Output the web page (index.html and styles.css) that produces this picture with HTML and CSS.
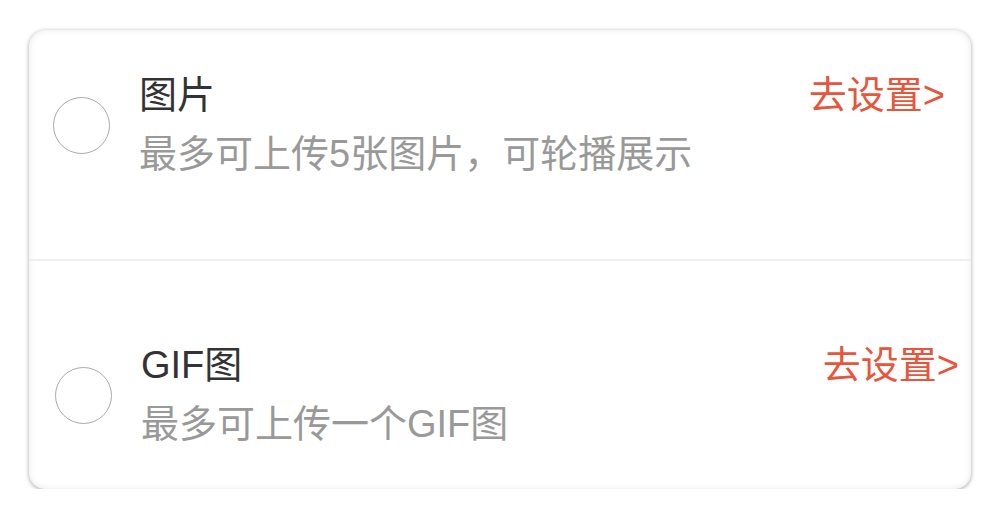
FILE: index.html
```html
<!DOCTYPE html>
<html lang="zh-CN">
<head>
    <meta charset="UTF-8">
    <meta name="viewport" content="width=device-width, initial-scale=1.0">
    <title>图片设置</title>
    <link rel="stylesheet" href="styles.css">
</head>
<body>
    <div class="card">
        <div class="option option-first">
            <div class="option-main">
                <span class="radio"></span>
                <div class="option-body">
                    <div class="option-head">
                        <span class="option-title">图片</span>
                        <a class="option-link" href="#">去设置&gt;</a>
                    </div>
                    <p class="option-desc">最多可上传5张图片，可轮播展示</p>
                </div>
            </div>
        </div>
        <div class="option option-last">
            <div class="option-main">
                <span class="radio"></span>
                <div class="option-body">
                    <div class="option-head">
                        <span class="option-title">GIF图</span>
                        <a class="option-link option-link-far" href="#">去设置&gt;</a>
                    </div>
                    <p class="option-desc">最多可上传一个GIF图</p>
                </div>
            </div>
        </div>
    </div>
</body>
</html>
```

FILE: styles.css
```css
body {
    margin: 0;
    background-color: #fff;
    font-family: "Liberation Sans", "Noto Sans CJK SC", sans-serif;
    color: #333;
}
.card {
    margin: 30px 29px 0;
    height: 459px;
    border-radius: 16px;
    background-color: #fff;
    box-shadow: 0 1px 4px rgba(0,0,0,0.35), inset 0 0 7px rgba(0,0,0,0.09);
    display: flex;
    flex-direction: column;
}
.option {
    flex: 1;
    display: flex;
    flex-direction: column;
    padding: 0 12px 0 24px;
}
.option-first {
    justify-content: flex-start;
    padding-top: 36px;
    border-bottom: 2px solid #efefef;
}
.option-last {
    justify-content: flex-end;
    padding-bottom: 35px;
    padding-left: 26px;
}
.option-main {
    display: flex;
    align-items: center;
}
.radio {
    flex: none;
    width: 55px;
    height: 55px;
    border: 1.5px solid #aaa;
    border-radius: 50%;
    margin-right: 29px;
}
.option-body {
    flex: 1;
}
.option-head {
    display: flex;
    justify-content: space-between;
    align-items: center;
}
.option-title {
    font-size: 38px;
    line-height: 58px;
    color: #333;
}
.option-link {
    font-size: 38px;
    line-height: 58px;
    color: #e8553a;
    text-decoration: none;
    margin-right: 14px;
}
.option-link-far {
    margin-right: 0;
}
.option-desc {
    margin: 0;
    font-size: 38px;
    line-height: 60px;
    color: #999;
}
```
